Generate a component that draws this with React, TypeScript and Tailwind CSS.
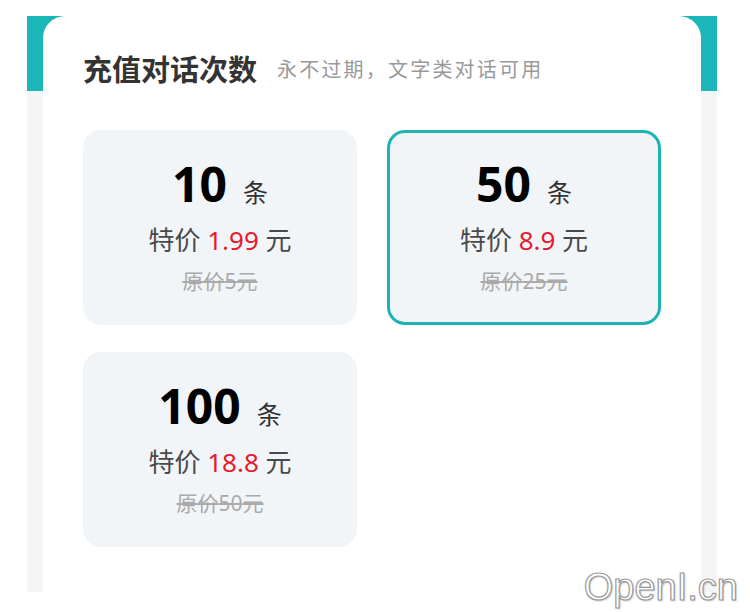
import React from 'react';

interface Pack {
  count: number;
  price: string;
  original: number;
}

const packs: Pack[] = [
  { count: 10, price: '1.99', original: 5 },
  { count: 50, price: '8.9', original: 25 },
  { count: 100, price: '18.8', original: 50 },
];

const FONT = 'font-["Noto_Sans","Noto_Sans_CJK_SC",sans-serif]';

const App: React.FC = () => {
  const selected = 1;

  return (
    <div className={`relative min-h-[612px] bg-white px-[27px] pt-4 ${FONT}`}>
      <div className="h-[576px] w-[690px] bg-[linear-gradient(to_bottom,#1bb6b7_75px,#f5f5f7_75px)] px-4">
        <div className="h-full rounded-t-[22px] bg-white px-10 pt-[34px]">
          <div className="flex items-center h-10">
            <h1 className="text-[29px] font-bold text-[#333] leading-10">充值对话次数</h1>
            <span className="ml-5 text-[20px] tracking-[2.2px] text-[#999] leading-10">
              永不过期，文字类对话可用
            </span>
          </div>

          <div className="mt-10 grid grid-cols-2 gap-x-[30px] gap-y-[27px]">
            {packs.map((p, i) => (
              <div
                key={p.count}
                className={`flex h-[195px] flex-col items-center justify-center rounded-[18px] bg-[#f2f5f8] ${
                  i === selected ? 'border-[3px] border-[#1fb3b4]' : 'border-[3px] border-transparent'
                }`}
              >
                <div className="flex items-baseline leading-none">
                  <span className="text-[48px] font-bold text-black">{p.count}</span>
                  <span className="ml-4 text-[25px] text-[#333]">条</span>
                </div>
                <div className="mt-[13px] text-[26px] leading-[39px] text-[#4a4a4a]">
                  特价 <span className="text-[#e8192c]">{p.price}</span> 元
                </div>
                <div className="mt-[6px] text-[21px] leading-[30px] text-[#aaa] line-through">
                  原价{p.original}元
                </div>
              </div>
            ))}
          </div>
        </div>
      </div>

      <div className='absolute right-[12px] bottom-[6px] font-["Liberation_Sans",sans-serif] text-[38px] leading-none text-white [-webkit-text-stroke:1.2px_#9a9a9a] [text-shadow:1px_1px_2px_rgba(0,0,0,0.25)]'>
        OpenI.cn
      </div>
    </div>
  );
};

export default App;
